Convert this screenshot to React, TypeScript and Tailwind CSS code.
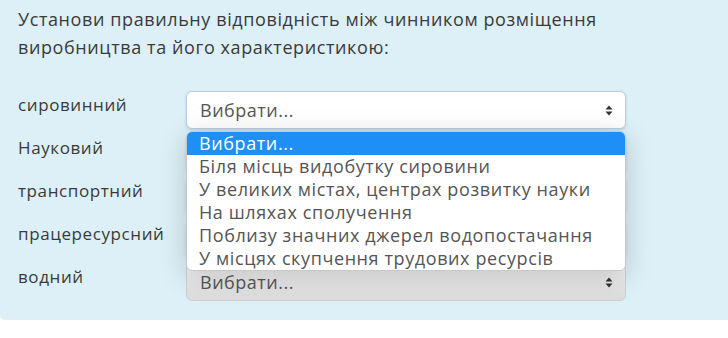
import React from "react";

const labels = ["сировинний", "Науковий", "транспортний", "працересурсний", "водний"];

const options = [
  "Вибрати...",
  "Біля місць видобутку сировини",
  "У великих містах, центрах розвитку науки",
  "На шляхах сполучення",
  "Поблизу значних джерел водопостачання",
  "У місцях скупчення трудових ресурсів",
];

function Arrows() {
  return (
    <svg width="8" height="11" viewBox="0 0 8 11" className="shrink-0">
      <path d="M4 0.5 L7.5 4.5 H0.5 Z" fill="#333" />
      <path d="M4 10.5 L7.5 6.5 H0.5 Z" fill="#333" />
    </svg>
  );
}

// selects under the open list are covered, so only the first and last show their text
function SelectBox({ gray, hidden }: { gray?: boolean; hidden?: boolean }) {
  return (
    <div
      className={
        "h-[38px] w-[440px] rounded-[6px] border flex items-center justify-between pl-[13px] pr-[12px] text-[18px] tracking-[0.5px] text-[#555] " +
        (gray
          ? "border-[#d0d0d0] bg-gradient-to-b from-[#f3f3f3] to-[#dcdcdc]"
          : "border-[#b9cde6] bg-white shadow-[0_1px_3px_rgba(80,120,180,0.25)]")
      }
    >
      {!hidden && <span>Вибрати...</span>}
      <Arrows />
    </div>
  );
}

export default function App() {
  return (
    <div className="w-[728px] h-[338px] bg-white font-['Open_Sans',sans-serif] text-[#3a3a3a] overflow-hidden">
      <div className="h-[320px] bg-[#ddf0f7] rounded-bl-[5px] pt-[5px] pl-[18px]">
        <p className="text-[18px] leading-[28px] tracking-[0.6px] w-[640px]">
          Установи правильну відповідність між чинником розміщення виробництва та його характеристикою:
        </p>
        <div className="relative mt-[30px] flex flex-col gap-[5px]">
          {labels.map((l, i) => (
            <div key={l} className="flex items-start h-[38px]">
              <div className="w-[168px] text-[17px] leading-[28px] tracking-[0.6px]">{l}</div>
              <SelectBox gray={i === 4} hidden={i > 0 && i < 4} />
            </div>
          ))}
          <div className="absolute left-[168px] top-[40px] w-[440px] bg-white rounded-[6px] border border-[#c8c8c8] shadow-[0_6px_28px_rgba(0,0,0,0.18)] overflow-hidden">
            {options.map((o, i) => (
              <div
                key={o}
                className={
                  "h-[23px] leading-[23px] pl-[12px] text-[18px] tracking-[0.6px] " +
                  (i === 0 ? "bg-[#1e8ff6] text-white" : "text-[#555]")
                }
              >
                {o}
              </div>
            ))}
          </div>
        </div>
      </div>
    </div>
  );
}
